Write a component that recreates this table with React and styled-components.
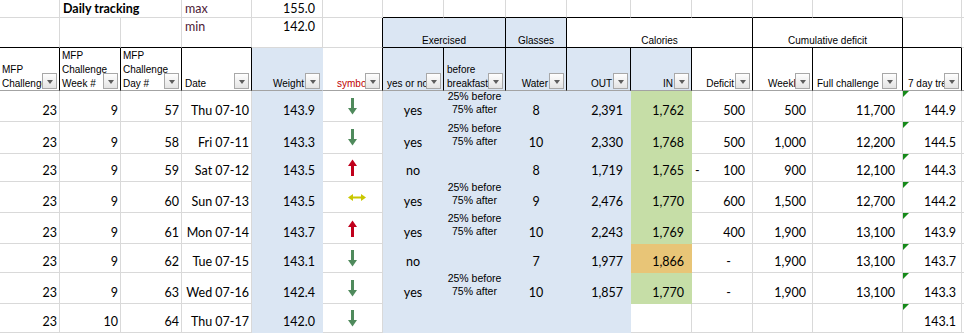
import React from 'react';
import styled, { createGlobalStyle } from 'styled-components';

const GRID = '#d9d9d9';
const BLUE = '#dbe6f3';
const GREEN = '#c6dea7';
const ORANGE = '#e8c577';
const BLACK = '#000';
const HEADER_LINE = '#a3a3a3';
const MAROON = '#4d1a35';

const Global = createGlobalStyle`
  html, body { margin: 0; padding: 0; background: #fff; overflow: hidden; }
  #root { width: 964px; height: 333px; overflow: hidden; }
`;

const Sheet = styled.div`
  display: grid;
  grid-template-columns: 60px 61px 61px 70px 71px 60px 61px 62px 61px 64px 61px 61px 60px 90px 59px 1fr;
  grid-template-rows: 18px 30px 43px 31px 32px 28px 31px 31px 29px 31px 29px;
  width: 964px;
  height: 333px;
  font-family: Lato, 'Liberation Sans', sans-serif;
  font-size: 12.5px;
  color: #000;
`;

const Cell = styled.div`
  position: relative;
  box-sizing: border-box;
  min-width: 0;
  grid-column: span ${p => p.$span || 1};
  background: ${p => p.$fill || '#fff'};
  border-right: 1px solid ${p => p.$rb || p.$fill || GRID};
  border-bottom: 1px solid ${p => p.$bb || p.$fill || GRID};
  display: flex;
  align-items: ${p => (p.$v === 'top' ? 'flex-start' : p.$v === 'center' ? 'center' : 'flex-end')};
  justify-content: ${p =>
    p.$align === 'right' ? 'flex-end' : p.$align === 'center' ? 'center' : p.$align === 'between' ? 'space-between' : 'flex-start'};
  padding: ${p => p.$pt ?? 0}px ${p => p.$pr ?? 2}px ${p => p.$pb ?? 3}px ${p => p.$pl ?? 2}px;
  overflow: hidden;
  white-space: nowrap;
  line-height: 15px;
`;

const TrendCell = styled(Cell)`
  &::before {
    content: '';
    position: absolute;
    left: 0;
    top: 0;
    border-top: 6px solid #168a1a;
    border-right: 6px solid transparent;
  }
`;

const Title = styled.span`
  font-weight: 700;
  font-size: 12.5px;
`;

const Limit = styled.span`
  color: ${MAROON};
`;

const GroupCell = styled(Cell)`
  font-family: 'Liberation Sans', Arial, sans-serif;
  font-size: 10px;
  line-height: 12px;
  justify-content: center;
`;

const HeadCell = styled.div`
  position: relative;
  box-sizing: border-box;
  min-width: 0;
  background: ${p => p.$fill || '#fff'};
  border-right: 1px solid ${p => p.$rb || BLACK};
  border-bottom: 1px solid ${HEADER_LINE};
  display: flex;
  align-items: flex-end;
  padding: 0 2px 0 ${p => p.$pl ?? 2}px;
  font-family: 'Liberation Sans', Arial, sans-serif;
  font-size: 10px;
  overflow: hidden;
`;

const HeadLabel = styled.div`
  flex: 1;
  min-width: 0;
  text-align: ${p => p.$align || 'left'};
  white-space: ${p => (p.$nowrap ? 'nowrap' : 'normal')};
  line-height: 14px;
  color: ${p => p.$color || '#000'};
  padding-right: ${p => (p.$align === 'right' ? 16 : 0)}px;
  margin-bottom: -1px;
`;

const FilterButton = styled.span`
  position: absolute;
  right: ${p => p.$mr ?? 2}px;
  bottom: 1px;
  box-sizing: border-box;
  width: 15px;
  height: 16px;
  border: 1px solid #a8a8a8;
  background: linear-gradient(#fefefe, #e4e4e4);
  display: flex;
  align-items: center;
  justify-content: center;
  padding-top: 1px;
  &::after {
    content: '';
    border-left: 3.5px solid transparent;
    border-right: 3.5px solid transparent;
    border-top: 4px solid #5d5d5d;
  }
`;

const Note = styled.span`
  font-family: 'Liberation Sans', Arial, sans-serif;
  font-size: 10.5px;
  line-height: 13px;
  text-align: center;
`;

const Icon = styled.svg`
  display: block;
  margin-left: ${p => p.$ml ?? 0}px;
`;

const DownArrow = () => (
  <Icon width="9" height="17" viewBox="0 0 9 17">
    <rect x="3" y="0" width="3" height="11" fill="#4f8a5c" />
    <polygon points="0,10 9,10 4.5,16.5" fill="#4f8a5c" />
  </Icon>
);

const UpArrow = () => (
  <Icon width="9" height="17" viewBox="0 0 9 17">
    <rect x="3" y="6" width="3" height="11" fill="#c0001c" />
    <polygon points="0,7 9,7 4.5,0.5" fill="#c0001c" />
  </Icon>
);

const SideArrow = () => (
  <Icon width="18" height="7" viewBox="0 0 18 7" $ml={8}>
    <rect x="4" y="2.5" width="10" height="2" fill="#c9c700" />
    <polygon points="0,3.5 5,0 5,7" fill="#c9c700" />
    <polygon points="18,3.5 13,0 13,7" fill="#c9c700" />
  </Icon>
);

const headers = [
  { label: 'MFP Challenge' },
  { label: 'MFP Challenge Week #' },
  { label: 'MFP Challenge Day #' },
  { label: 'Date', pl: 3 },
  { label: 'Weight', align: 'right', fill: BLUE, rb: BLUE },
  { label: 'symbol', color: '#c00000', nowrap: true, pl: 14 },
  { label: 'yes or no', nowrap: true, pl: 4, fill: BLUE },
  { label: 'before breakfast', pl: 3, fill: BLUE },
  { label: 'Water', align: 'right', fill: BLUE },
  { label: 'OUT', align: 'right', fill: BLUE },
  { label: 'IN', align: 'right', fill: BLUE },
  { label: 'Deficit', align: 'right' },
  { label: 'Weekly', nowrap: true, pl: 15 },
  { label: 'Full challenge', nowrap: true, pl: 4, mr: 5 },
  { label: '7 day trend', nowrap: true, pl: 5 },
];

const rows = [
  { c: 57, date: 'Thu 07-10', w: '143.9', sym: 'down', ex: 'yes', bf: true, water: 8, out: '2,391', inn: '1,762', inFill: GREEN, def: '500', weekly: '500', full: '11,700', trend: '144.9' },
  { c: 58, date: 'Fri 07-11', w: '143.3', sym: 'down', ex: 'yes', bf: true, water: 10, out: '2,330', inn: '1,768', inFill: GREEN, def: '500', weekly: '1,000', full: '12,200', trend: '144.5' },
  { c: 59, date: 'Sat 07-12', w: '143.5', sym: 'up', ex: 'no', bf: false, water: 8, out: '1,719', inn: '1,765', inFill: GREEN, def: 'neg', weekly: '900', full: '12,100', trend: '144.3' },
  { c: 60, date: 'Sun 07-13', w: '143.5', sym: 'side', ex: 'yes', bf: true, water: 9, out: '2,476', inn: '1,770', inFill: GREEN, def: '600', weekly: '1,500', full: '12,700', trend: '144.2' },
  { c: 61, date: 'Mon 07-14', w: '143.7', sym: 'up', ex: 'yes', bf: true, water: 10, out: '2,243', inn: '1,769', inFill: GREEN, def: '400', weekly: '1,900', full: '13,100', trend: '143.9' },
  { c: 62, date: 'Tue 07-15', w: '143.1', sym: 'down', ex: 'no', bf: false, water: 7, out: '1,977', inn: '1,866', inFill: ORANGE, def: 'zero', weekly: '1,900', full: '13,100', trend: '143.7' },
  { c: 63, date: 'Wed 07-16', w: '142.4', sym: 'down', ex: 'yes', bf: true, water: 10, out: '1,857', inn: '1,770', inFill: GREEN, def: 'zero', weekly: '1,900', full: '13,100', trend: '143.3' },
  { c: 64, b: 10, date: 'Thu 07-17', w: '142.0', sym: 'down', ex: '', bf: false, water: '', out: '', inn: '', inFill: null, def: '', weekly: '', full: '', trend: '143.1' },
];

const symbols = { down: <DownArrow />, up: <UpArrow />, side: <SideArrow /> };

function Deficit({ value }) {
  if (value === 'neg') {
    return (
      <Cell $align="between" $pl={3} $pr={7}>
        <span>-</span>
        <span>100</span>
      </Cell>
    );
  }
  if (value === 'zero') {
    return <Cell $align="right" $pr={21}>-</Cell>;
  }
  return <Cell $align="right" $pr={7}>{value}</Cell>;
}

function DataRow({ r }) {
  return (
    <>
      <Cell $align="right">23</Cell>
      <Cell $align="right">{r.b ?? 9}</Cell>
      <Cell $align="right">{r.c}</Cell>
      <Cell $align="right">{r.date}</Cell>
      <Cell $align="right" $fill={BLUE} $pr={7}>{r.w}</Cell>
      <Cell $align="center" $v="center" $pb={0}>{symbols[r.sym]}</Cell>
      <Cell $align="center" $fill={BLUE}>{r.ex}</Cell>
      <Cell $align="center" $fill={BLUE} $pb={5}>
        {r.bf && (
          <Note>
            25% before
            <br />
            75% after
          </Note>
        )}
      </Cell>
      <Cell $align="center" $fill={BLUE}>{r.water}</Cell>
      <Cell $align="right" $fill={BLUE} $pr={7}>{r.out}</Cell>
      <Cell $align="right" $fill={r.inFill || undefined} $pr={7}>{r.inn}</Cell>
      <Deficit value={r.def} />
      <Cell $align="right" $pr={6}>{r.weekly}</Cell>
      <Cell $align="right" $pr={7}>{r.full}</Cell>
      <TrendCell $align="right" $pr={5}>{r.trend}</TrendCell>
      <Cell />
    </>
  );
}

export default function App() {
  return (
    <>
      <Global />
      <Sheet>
        {/* row 1 */}
        <Cell />
        <Cell $span={2} $pl={3} $pb={1}>
          <Title>Daily tracking</Title>
        </Cell>
        <Cell $pl={3} $pb={1}>
          <Limit>max</Limit>
        </Cell>
        <Cell $align="right" $pr={7} $pb={1}>155.0</Cell>
        <Cell />
        {Array.from({ length: 8 }).map((_, i) => (
          <Cell key={i} $bb={BLACK} />
        ))}
        <Cell />
        <Cell />

        {/* row 2 */}
        <Cell $bb={BLACK} />
        <Cell $bb={BLACK} />
        <Cell $bb={BLACK} />
        <Cell $bb={BLACK} $v="top" $pt={1} $pl={3}>
          <Limit>min</Limit>
        </Cell>
        <Cell $v="top" $pt={1} $align="right" $pr={7}>142.0</Cell>
        <Cell $rb={BLACK} />
        <GroupCell $span={2} $fill={BLUE} $rb={BLACK} $bb={BLACK} $pb={0}>Exercised</GroupCell>
        <GroupCell $fill={BLUE} $rb={BLACK} $bb={BLACK} $pb={0}>Glasses</GroupCell>
        <GroupCell $span={3} $rb={BLACK} $bb={BLACK} $pb={0}>Calories</GroupCell>
        <GroupCell $span={2} $rb={BLACK} $bb={BLACK} $pb={0}>Cumulative deficit</GroupCell>
        <Cell $bb={BLACK} />
        <Cell />

        {/* row 3: column headers */}
        {headers.map(h => (
          <HeadCell key={h.label} $fill={h.fill} $rb={h.rb} $pl={h.pl}>
            <HeadLabel $align={h.align} $nowrap={h.nowrap} $color={h.color}>
              {h.label}
            </HeadLabel>
            <FilterButton $mr={h.mr} />
          </HeadCell>
        ))}
        <Cell $bb={HEADER_LINE} />

        {rows.map((r, i) => (
          <DataRow key={i} r={r} />
        ))}
      </Sheet>
    </>
  );
}
